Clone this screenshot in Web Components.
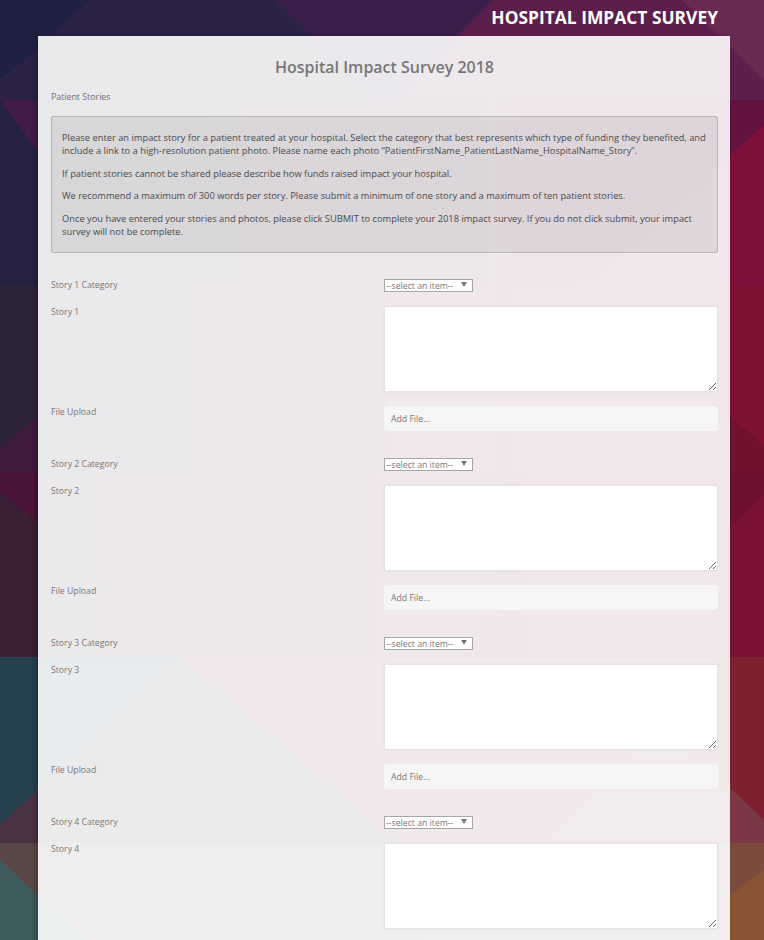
<!DOCTYPE html>
<html lang="en">
<head>
<meta charset="utf-8">
<title>Hospital Impact Survey</title>
<style>
html,body{margin:0;padding:0;height:940px;overflow:hidden;font-family:"Open Sans",sans-serif}
</style>
</head>
<body>
<survey-page>
  <survey-panel heading="Hospital Impact Survey 2018" section="Patient Stories">
    <info-box>
      <p>Please enter an impact story for a patient treated at your hospital. Select the category that best represents which type of funding they benefited, and include a link to a high-resolution patient photo. Please name each photo “PatientFirstName_PatientLastName_HospitalName_Story”.</p>
      <p>If patient stories cannot be shared please describe how funds raised impact your hospital.</p>
      <p>We recommend a maximum of 300 words per story. Please submit a minimum of one story and a maximum of ten patient stories.</p>
      <p>Once you have entered your stories and photos, please click SUBMIT to complete your 2018 impact survey. If you do not click submit, your impact survey will not be complete.</p>
    </info-box>
    <story-block n="1"></story-block>
    <story-block n="2"></story-block>
    <story-block n="3"></story-block>
    <story-block n="4" nofile></story-block>
  </survey-panel>
</survey-page>
<script>
function grad(id,a,b){return `<linearGradient id="${id}" gradientUnits="userSpaceOnUse" x1="60" y1="0" x2="560" y2="0"><stop offset="0" stop-color="${a}"/><stop offset="1" stop-color="${b}"/></linearGradient>`;}
class SurveyPage extends HTMLElement{
  constructor(){super();this.attachShadow({mode:'open'}).innerHTML=`
  <style>
    :host{display:block;position:relative;width:764px;height:940px;overflow:hidden;background:#3a2049}
    svg{position:absolute;left:0;top:0;width:764px;height:940px;display:block}
    .wrap{position:relative;display:flex;flex-direction:column;height:100%;padding:0 34px 0 38px;box-sizing:border-box}
    header{height:36px;flex:none;display:flex;justify-content:flex-end;align-items:center;padding-right:12px;
      font:700 17.4px/36px "Open Sans",sans-serif;color:#fff;padding-bottom:3px;box-sizing:border-box}
  </style>
  <svg viewBox="0 0 764 940" aria-hidden="true">
    <defs>
      ${grad('b','#24223e','#7f103c')}
      ${grad('bw','#24223e','#62123e')}
      ${grad('c','#2d2338','#7f1233')}
      ${grad('d','#3a1f36','#7c1233')}
      ${grad('f','#5a4847','#6f5352')}
    </defs>
    <!-- band A -->
    <rect x="0" y="0" width="764" height="100" fill="#5c1f4c"/>
    <polygon fill="#1f2142" points="0,0 90,0 38,50 0,80"/>
    <polygon fill="#2b2244" points="90,0 275,0 313,36 377,100 0,100 0,80 38,50"/>
    <polygon fill="#3a2049" points="275,0 493,0 393,100 377,100"/>
    <polygon fill="#682a51" points="682,0 764,0 764,80"/>
    <!-- band B -->
    <rect x="0" y="100" width="764" height="185" fill="url(#b)"/>
    <polygon fill="url(#bw)" points="60,100 764,100 764,125 600,270 560,285 60,285"/>
    <polygon fill="#411c45" points="0,100 38,100 38,152"/>
    <!-- band C -->
    <rect x="0" y="285" width="764" height="187" fill="url(#c)"/>
    <polygon fill="#3f1b3c" points="-25,472 38,415 38,472"/>
    <polygon fill="#70122e" points="730,416 764,445 790,472 730,472"/>
    <!-- band D -->
    <rect x="0" y="472" width="764" height="185" fill="url(#d)"/>
    <polygon fill="#4a1439" points="-25,472 38,472 38,522"/>
    <polygon fill="#6c1030" points="730,472 790,472 764,495 730,527"/>
    <!-- band E -->
    <rect x="0" y="657" width="764" height="186" fill="#7e2130"/>
    <polygon fill="#3b3a3e" points="180,657 300,760 395,843 0,843 0,825"/>
    <polygon fill="#27404f" points="0,657 180,657 38,790 0,825"/>
    <polygon fill="#4a3342" points="0,825 38,790 38,843 0,843"/>
    <polygon fill="#7b3744" points="660,725 730,788 764,820 764,843 540,843"/>
    <!-- band F -->
    <rect x="0" y="843" width="764" height="97" fill="url(#f)"/>
    <polygon fill="#7b4b3d" points="730,843 764,843 764,870 730,895"/>
    <polygon fill="#3f5a5c" points="0,860 38,895 88,940 0,940"/>
    <polygon fill="#8a5432" points="764,870 730,895 730,940 764,940"/>
  </svg>
  <div class="wrap">
    <header>HOSPITAL IMPACT SURVEY</header>
    <slot></slot>
  </div>`;}
}
class SurveyPanel extends HTMLElement{
  constructor(){super();this.attachShadow({mode:'open'});}
  connectedCallback(){
    this.shadowRoot.innerHTML=`
    <style>
      :host{display:block;flex:1;background:rgba(255,255,255,.9);padding:19px 12px 0 13px;box-shadow:-3px 0 5px rgba(0,0,0,.2)}
      h1{margin:0 0 11px;font:600 16px/24px "Open Sans",sans-serif;color:#777;text-align:center}
      .sec{font:400 8.8px/14px "Open Sans",sans-serif;color:#707070;margin:0 0 12px}
    </style>
    <h1>${this.getAttribute('heading')}</h1>
    <div class="sec">${this.getAttribute('section')}</div>
    <slot></slot>`;
  }
}
class InfoBox extends HTMLElement{
  constructor(){super();this.attachShadow({mode:'open'}).innerHTML=`
  <style>
    :host{display:block;box-sizing:border-box;height:137px;background:rgba(0,0,0,.075);border:1px solid #b6b6b6;border-radius:2px;
      padding:14px 10px 14px 10px;font:400 9.32px/13px "Open Sans",sans-serif;color:#4a4a4a;margin-bottom:26px}
    ::slotted(p){margin:0 0 9.5px}
  </style><slot></slot>`;}
}
class StoryBlock extends HTMLElement{
  constructor(){super();this.attachShadow({mode:'open'});}
  connectedCallback(){
    const n=this.getAttribute('n');
    const file=this.hasAttribute('nofile')?'':`
    <label>File Upload</label>
    <div class="file">Add File...</div>`;
    this.shadowRoot.innerHTML=`
    <style>
      :host{display:grid;grid-template-columns:333px 334px;row-gap:14px;margin-bottom:27px;font:400 8.7px/11px "Open Sans",sans-serif;color:#777}
      label{display:block;padding-top:1px}
      .pick{position:relative;width:89px;height:13px}
      select{appearance:none;-webkit-appearance:none;display:block;box-sizing:border-box;width:89px;height:13px;margin:0;padding:1px 0 0 1px;
        border:1px solid #a6a6a6;border-radius:0;background:#fff;color:#777;font:400 8.7px/10px "Open Sans",sans-serif;outline:none}
      .pick svg{position:absolute;left:77px;top:3px;width:6px;height:5px;pointer-events:none}
      textarea{display:block;box-sizing:border-box;width:334px;height:86px;margin:0;padding:4px;border:1px solid #e3e1e2;border-radius:0;background:#fff;box-shadow:0 0 2px rgba(0,0,0,.06);outline:none;resize:both}
      .file{box-sizing:border-box;height:25px;background:#f6f6f6;border-radius:4px;padding-left:7px;font:400 8.7px/27px "Open Sans",sans-serif;color:#777}
    </style>
    <label>Story ${n} Category</label>
    <div class="pick"><select aria-label="Story ${n} Category"><option>--select an item--</option></select>
      <svg viewBox="0 0 6 5" aria-hidden="true"><polygon points="0,0 6,0 3,5" fill="#777"/></svg></div>
    <label>Story ${n}</label>
    <textarea aria-label="Story ${n}"></textarea>${file}`;
  }
}
customElements.define('survey-page',SurveyPage);
customElements.define('survey-panel',SurveyPanel);
customElements.define('info-box',InfoBox);
customElements.define('story-block',StoryBlock);
</script>
</body>
</html>
